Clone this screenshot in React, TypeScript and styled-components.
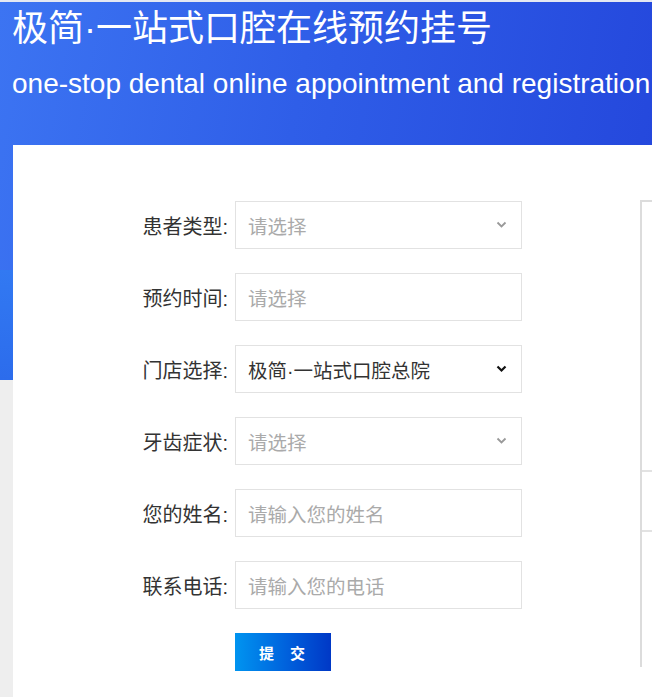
import React from 'react';
import styled, { createGlobalStyle } from 'styled-components';

const GlobalStyle = createGlobalStyle`
  html, body {
    margin: 0;
    padding: 0;
    background: #eeeeee;
    overflow: hidden;
  }
  * {
    box-sizing: border-box;
  }
`;

const cjk = `'Liberation Sans', 'Noto Sans CJK SC', sans-serif`;

const Page = styled.div`
  width: 652px;
  height: 697px;
  overflow: hidden;
  font-family: ${cjk};
  border-top: 2px solid #e4e8f2;
`;

const Hero = styled.header`
  height: 268px;
  padding: 5px 0 0 12px;
  background: linear-gradient(100deg, #3c74f2 0%, #2f5ee8 45%, #2447dc 100%);
  color: #fff;
  white-space: nowrap;
`;

const Title = styled.h1`
  margin: 0;
  font-family: ${cjk};
  font-weight: 400;
  font-size: 36px;
  line-height: 44px;
`;

const Subtitle = styled.p`
  margin: 17px 0 0;
  font-family: 'Liberation Sans', Arial, sans-serif;
  font-size: 28px;
  line-height: 32px;
`;

const Band = styled.div`
  height: 110px;
  background: linear-gradient(180deg, #3279f2 0%, #2c6cec 100%);
`;

const Card = styled.main`
  margin: -235px 0 0 13px;
  width: 700px;
  height: 600px;
  background: #fff;
  display: flex;
  padding-top: 56px;
`;

const Form = styled.form`
  display: flex;
  flex-direction: column;
  gap: 24px;
  width: 509px;
  flex-shrink: 0;
`;

const Row = styled.div`
  display: flex;
  align-items: center;
  gap: 7px;
`;

const Label = styled.label`
  width: 215px;
  text-align: right;
  font-family: ${cjk};
  font-size: 20px;
  color: #333;
  white-space: nowrap;
`;

const Field = styled.div<{ $filled?: boolean }>`
  position: relative;
  width: 287px;
  height: 48px;
  border: 1px solid #e2e2e2;
  display: flex;
  align-items: center;
  padding: 0 12px;
  font-family: ${cjk};
  font-size: 19.5px;
  color: ${({ $filled }) => ($filled ? '#333' : '#aaa')};
  white-space: nowrap;
`;

const Chevron = styled.svg<{ $dark?: boolean }>`
  position: absolute;
  right: 14px;
  top: 50%;
  margin-top: -4px;
  width: 11px;
  height: 8px;
  color: ${({ $dark }) => ($dark ? '#111' : '#999')};
`;

const ButtonRow = styled.div`
  padding-left: 222px;
`;

const Submit = styled.button`
  width: 96px;
  height: 38px;
  border: none;
  background: linear-gradient(90deg, #0094f0 0%, #0060dc 55%, #0038c6 100%);
  color: #fff;
  font-family: 'Noto Sans CJK SC', sans-serif;
  font-size: 15px;
  font-weight: 700;
  letter-spacing: 16px;
  padding-left: 20px;
  cursor: pointer;
`;

const SidePanel = styled.aside`
  margin-left: 118px;
  margin-top: -1px;
  width: 200px;
  height: 467px;
  border-left: 2px solid #dcdcdc;
  border-top: 2px solid #dcdcdc;
  display: flex;
  flex-direction: column;
`;

const PanelBlock = styled.div<{ $h: number; $line?: boolean }>`
  height: ${({ $h }) => $h}px;
  border-bottom: ${({ $line }) => ($line ? '2px solid #e2e2e2' : 'none')};
`;

const ArrowIcon = ({ dark }: { dark?: boolean }) => (
  <Chevron $dark={dark} viewBox="0 0 11 8">
    <path d="M1.5 1.5 L5.5 5.5 L9.5 1.5" fill="none" stroke="currentColor" strokeWidth={dark ? 2.2 : 1.8} />
  </Chevron>
);

const rows: { label: string; value: string; filled?: boolean; select?: boolean }[] = [
  { label: '患者类型:', value: '请选择', select: true },
  { label: '预约时间:', value: '请选择' },
  { label: '门店选择:', value: '极简·一站式口腔总院', filled: true, select: true },
  { label: '牙齿症状:', value: '请选择', select: true },
  { label: '您的姓名:', value: '请输入您的姓名' },
  { label: '联系电话:', value: '请输入您的电话' },
];

const App = () => (
  <>
    <GlobalStyle />
    <Page>
      <Hero>
        <Title>极简·一站式口腔在线预约挂号</Title>
        <Subtitle>one-stop dental online appointment and registration</Subtitle>
      </Hero>
      <Band />
      <Card>
        <Form>
          {rows.map((r) => (
            <Row key={r.label}>
              <Label>{r.label}</Label>
              <Field $filled={r.filled}>
                {r.value}
                {r.select && <ArrowIcon dark={r.filled} />}
              </Field>
            </Row>
          ))}
          <ButtonRow>
            <Submit type="button">提交</Submit>
          </ButtonRow>
        </Form>
        <SidePanel>
          <PanelBlock $h={270} $line />
          <PanelBlock $h={60} $line />
          <PanelBlock $h={133} />
        </SidePanel>
      </Card>
    </Page>
  </>
);

export default App;
